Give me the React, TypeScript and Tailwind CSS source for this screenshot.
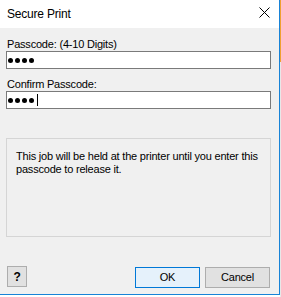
import React from "react";

const font = "[font-family:'Liberation_Sans',Arial,sans-serif]";

function Dots({ caret }: { caret?: boolean }) {
  return (
    <div className="flex h-full items-center pl-[1px]">
      {[0, 1, 2, 3].map((i) => (
        <span key={i} className="mr-[2px] h-[5px] w-[5px] rounded-full bg-black" />
      ))}
      {caret && <span className="ml-[1px] h-[12px] w-[1px] bg-black" />}
    </div>
  );
}

function PasswordBox({ caret }: { caret?: boolean }) {
  return (
    <div className="h-[18px] w-[265px] border border-[#7a7a7a] bg-white">
      <Dots caret={caret} />
    </div>
  );
}

export default function App() {
  return (
    <div className={`flex h-[297px] w-[281px] bg-white text-[11px] tracking-[-0.2px] text-black ${font}`}>
      <div className="flex h-[295px] w-[280px] flex-col border-r border-b border-[#1883d7]">
        <div className="flex h-[28px] items-start justify-between bg-white pl-[7px] pr-[9px]">
          <span className="mt-[7px] text-[12px] leading-[14px]">Secure Print</span>
          <svg className="mt-[7px]" width="11" height="11" viewBox="0 0 11 11">
            <path d="M0.5 0.5 L10.5 10.5 M10.5 0.5 L0.5 10.5" stroke="#000" strokeWidth="1" fill="none" />
          </svg>
        </div>

        <div className="flex flex-1 flex-col bg-[#f0f0f0] pl-[6px]">
          <label className="mt-[9px] block pl-[1px] leading-[14px]">Passcode: (4-10 Digits)</label>
          <PasswordBox />

          <label className="mt-[8px] block pl-[1px] leading-[14px]">Confirm Passcode:</label>
          <PasswordBox caret />

          <div className="mt-[29px] h-[99px] w-[265px] border border-[#d5d5d5] pt-[11px] pl-[9px] leading-[13px] whitespace-nowrap">
            This job will be held at the printer until you enter this
            <br />
            passcode to release it.
          </div>

          <div className="mt-[29px] flex items-start">
            <button className="ml-[1px] flex h-[21px] w-[20px] items-center justify-center border border-[#adadad] bg-[#e1e1e1] text-[12px] font-bold">
              ?
            </button>
            <button className="mt-[1px] ml-[108px] h-[21px] w-[65px] border border-[#0078d7] bg-[#e5f1fb]">OK</button>
            <button className="mt-[1px] ml-[5px] h-[21px] w-[65px] border border-[#adadad] bg-[#e1e1e1]">Cancel</button>
          </div>
        </div>
      </div>
      <div className="flex w-[1px] flex-col">
        <div className="h-[62px] bg-[#f0a030]" />
        <div className="flex-1 bg-[#e8e8e8]" />
      </div>
    </div>
  );
}
